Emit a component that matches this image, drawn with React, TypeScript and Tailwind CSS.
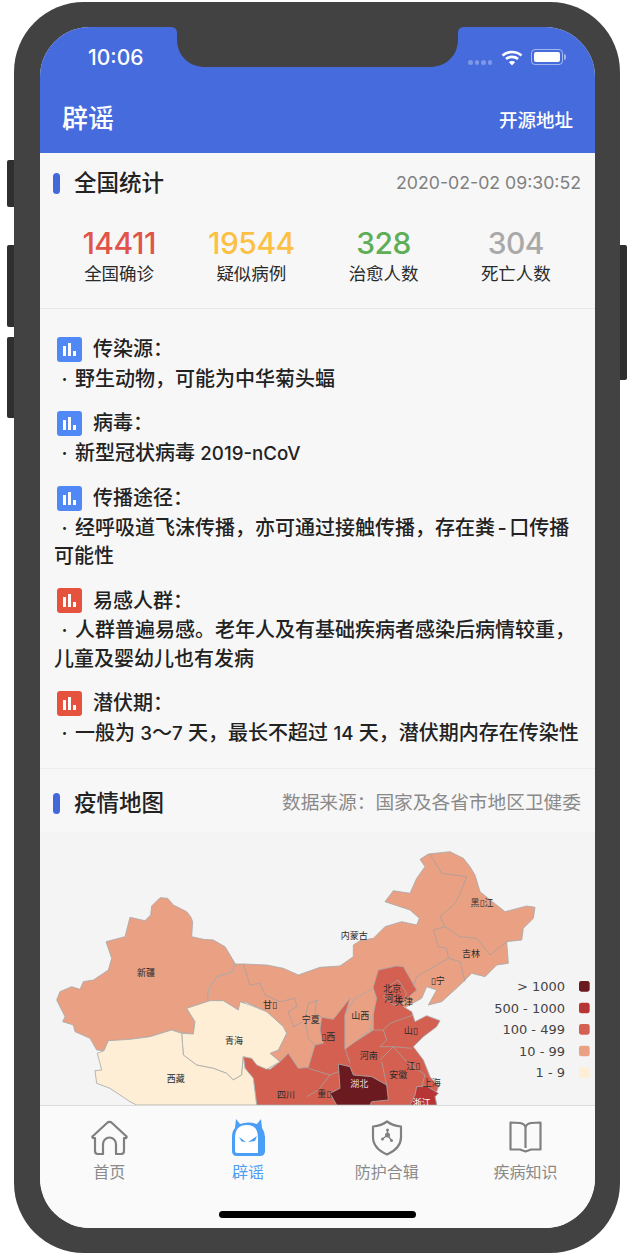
import type { ReactNode } from "react"

const CJK = "font-['Inter','Noto_Sans_CJK_SC',sans-serif]"

function Latin({ children }: { children: ReactNode }) {
  return <span className="text-[18.7px]">{children}</span>
}

// full-width punctuation is written as escapes
const infoList: { title: string; color: string; lines: ReactNode }[] = [
  { title: "传染源\uFF1A", color: "bg-[#5089f6]", lines: "野生动物\uFF0C可能为中华菊头蝠" },
  { title: "病毒\uFF1A", color: "bg-[#5089f6]", lines: <>新型冠状病毒 <Latin>2019-nCoV</Latin></> },
  {
    title: "传播途径\uFF1A",
    color: "bg-[#5089f6]",
    lines: <>经呼吸道飞沫传播{"\uFF0C"}亦可通过接触传播{"\uFF0C"}存在粪<span className="px-[2.5px]">-</span>口传播可能性</>,
  },
  { title: "易感人群\uFF1A", color: "bg-[#e5533f]", lines: "人群普遍易感。老年人及有基础疾病者感染后病情较重\uFF0C儿童及婴幼儿也有发病" },
  {
    title: "潜伏期\uFF1A",
    color: "bg-[#e5533f]",
    lines: <>一般为 <Latin>3</Latin>{"\uFF5E"}<Latin>7</Latin> 天{"\uFF0C"}最长不超过 <Latin>14</Latin> 天{"\uFF0C"}潜伏期内存在传染性</>,
  },
]

const stats = [
  { value: "14411", label: "全国确诊", color: "text-[#e0544a]" },
  { value: "19544", label: "疑似病例", color: "text-[#fcc044]" },
  { value: "328", label: "治愈人数", color: "text-[#5dae56]" },
  { value: "304", label: "死亡人数", color: "text-[#a9a9a9]" },
]

// map coordinates: 3 units per pixel
const regions = [
  { fill: "#e9a083", d: "M360 203L383 205L400 225L420 235L440 245L452 260L458 275L455 320L490 328L520 330L555 350L570 375L585 400L575 428L530 440L505 480L503 515L440 535L465 575L460 612L425 608L395 600L330 620L270 628L240 635L205 632L192 662L170 660L150 625L105 605L100 585L68 575L75 560L50 510L60 485L95 470L120 478L130 455L160 450L205 420L215 385L198 335L255 320L270 262L315 272L332 255L335 228Z" },
  { fill: "#e9a083", d: "M585 402L610 402L680 405L730 415L775 435L840 412L900 408L940 380L940 345L960 332L1000 325L1035 290L1085 275L1130 285L1138 265L1110 240L1035 215L1060 182L1110 190L1130 145L1155 110L1140 88L1165 72L1230 65L1270 85L1290 110L1305 135L1320 185L1370 225L1395 245L1460 228L1485 232L1480 265L1450 295L1445 330L1400 335L1405 400L1370 405L1335 440L1295 430L1260 465L1205 515L1165 525L1190 480L1160 470L1145 505L1100 530L1000 640L850 740L775 715L745 670L720 695L690 670L715 660L740 610L730 590L680 545L615 515L600 540L595 540L550 512L503 515L505 480L530 440L575 428Z" },
  { fill: "#d46051", d: "M610 680L635 685L665 712L690 718L720 695L745 670L775 715L805 712L825 645L850 640L840 600L845 562L880 568L930 505L915 555L915 655L1000 600L1000 470L1015 420L1070 408L1090 410L1130 480L1085 520L1090 530L1115 545L1125 575L1160 557L1200 572L1190 590L1150 620L1120 650L1150 690L1170 740L1195 770L1185 800L1190 825L650 825L640 745L615 715Z" },
  { fill: "#e9a083", d: "M915 555L945 505L1000 475L1010 505L990 600L915 658Z" },
  { fill: "#fdeed5", d: "M440 535L510 512L550 512L595 540L600 515L630 525L680 545L730 590L740 610L715 660L690 670L720 695L680 718L650 705L635 685L610 680L605 735L580 750L560 730L520 715L470 705L430 675L425 610L460 612L465 575Z" },
  { fill: "#fdeed5", d: "M205 632L270 628L330 620L395 600L425 610L430 675L470 705L520 715L560 730L580 750L605 735L610 680L615 715L640 745L650 825L290 825L270 815L210 775L170 760L165 722L185 720L172 670L192 662Z" },
  { fill: "#b83535", d: "M1130 770L1160 768L1195 790L1185 800L1190 825L1110 825L1125 795Z" },
  { fill: "#6b1a1f", d: "M895 702L930 710L940 735L995 740L1040 765L1045 810L995 815L990 825L890 825L870 790L900 775Z" },
]

const borders = [
  "M610 402L630 465L660 460L675 495L720 515L765 505L770 530L745 545L760 590L790 575",
  "M835 510L805 520L795 565L805 625L825 645",
  "M830 510L825 550L845 562",
  "M1170 72L1205 130L1280 140L1260 190L1245 220L1200 260L1215 290L1180 300L1195 350L1220 355L1225 385L1130 440L1120 470",
  "M1215 290L1260 320L1310 325L1350 375L1400 335",
  "M1225 385L1260 395L1275 455",
  "M915 655L930 700",
  "M990 600L1030 600L1050 580L1120 555",
  "M1030 600L1040 630L1020 650L1060 650L1115 655",
  "M1020 690L1060 650L1095 690L1155 735L1145 770",
  "M1025 695L1040 765",
  "M800 800L835 780L870 735",
  "M805 715L870 735L895 725",
  "M1050 465L1075 450L1100 490L1085 520",
  "M1060 470L1030 500L1060 525L1085 520",
]

const labels = [
  { x: 318, y: 430, t: "新疆" }, { x: 690, y: 525, t: "甘▯" }, { x: 812, y: 570, t: "宁夏" },
  { x: 582, y: 632, t: "青海" }, { x: 407, y: 747, t: "西藏" }, { x: 738, y: 795, t: "四川" },
  { x: 943, y: 318, t: "内蒙古" }, { x: 1326, y: 220, t: "黑▯江" }, { x: 1293, y: 373, t: "吉林" },
  { x: 1193, y: 452, t: "▯宁" }, { x: 1057, y: 477, t: "北京" }, { x: 1060, y: 507, t: "河北" },
  { x: 1092, y: 515, t: "天津" }, { x: 961, y: 558, t: "山西" }, { x: 1112, y: 602, t: "山▯" },
  { x: 865, y: 622, t: "▯西" }, { x: 986, y: 678, t: "河南" }, { x: 1120, y: 708, t: "江▯" },
  { x: 1075, y: 736, t: "安徽" }, { x: 1175, y: 758, t: "上海" }, { x: 853, y: 793, t: "重▯" },
]

const legend = [
  { y: 469, t: "> 1000", fill: "#6b1a1f" },
  { y: 534, t: "500 - 1000", fill: "#b83535" },
  { y: 598, t: "100 - 499", fill: "#d46051" },
  { y: 663, t: "10 - 99", fill: "#e9a083" },
  { y: 728, t: "1 - 9", fill: "#fdeed5" },
]

function ChinaMap() {
  return (
    <svg viewBox="0 6 1665 819" className="block h-[273px] w-[555px] bg-[#f4f4f4] font-['DejaVu_Sans','Noto_Sans_CJK_SC',sans-serif]">
      {regions.map((r, i) => (
        <path key={i} d={r.d} fill={r.fill} stroke="#aaaaaa" strokeWidth="2.5" strokeLinejoin="round" />
      ))}
      {borders.map((d, i) => (
        <path key={i} d={d} fill="none" stroke="#aaa09b" strokeWidth="2.5" strokeLinejoin="round" />
      ))}
      {labels.map((l) => (
        <text key={l.t} x={l.x} y={l.y} fontSize="27" fill="#2b2b2b" textAnchor="middle" dominantBaseline="central">{l.t}</text>
      ))}
      <text x="958" y="763" fontSize="27" fill="#e6d4d4" textAnchor="middle" dominantBaseline="central">湖北</text>
      <text x="1145" y="820" fontSize="27" fill="#ffffff" textAnchor="middle" dominantBaseline="central">浙江</text>
      {legend.map((l) => (
        <g key={l.y}>
          <text x="1575" y={l.y} fontSize="39" fill="#444444" textAnchor="end" dominantBaseline="central">{l.t}</text>
          <rect x="1617" y={l.y - 16} width="32" height="32" rx="7" fill={l.fill} />
        </g>
      ))}
    </svg>
  )
}

function ChartIcon({ color }: { color: string }) {
  return (
    <span className={`flex h-[25px] w-[25px] shrink-0 items-end justify-center gap-[2.6px] rounded-[3px] pb-[6px] ${color}`}>
      <span className="h-[10px] w-[3px] bg-white" />
      <span className="h-[13px] w-[2.5px] bg-white" />
      <span className="h-[5px] w-[3px] bg-white" />
    </span>
  )
}

function SectionHead({ title, right, className }: { title: string; right: string; className: string }) {
  return (
    <div className={`flex items-center pl-[13px] pr-[14px] ${className}`}>
      <span className="h-[21px] w-[7px] rounded-full bg-[#4468dc]" />
      <span className="ml-[14px] text-[22.5px] font-medium text-[#222]">{title}</span>
      <span className={right.startsWith("2") ? "ml-auto text-[17.7px] text-[#808080]" : "ml-auto text-[18.7px] text-[#8a8a8a]"}>{right}</span>
    </div>
  )
}

function TabItem({ label, active, children }: { label: string; active?: boolean; children: ReactNode }) {
  return (
    <div className="flex w-[138.75px] flex-col items-center">
      <div className="flex h-[37px] items-center justify-center">{children}</div>
      <span className={`mt-[5px] text-[16px] leading-[22px] ${active ? "text-[#4a9ef5]" : "text-[#8a8a8a]"}`}>{label}</span>
    </div>
  )
}

export default function App() {
  return (
    <div className={`h-[1256px] w-[634px] overflow-hidden bg-white pl-[14px] pt-[2px] ${CJK}`}>
      <div className="relative h-[1251px] w-[606px] rounded-[70px] bg-[#424242] pb-[25px] pl-[26px] pr-[25px] pt-[25px]">
        {/* side buttons */}
        <span className="absolute left-[-7px] top-[158px] h-[47px] w-[7px] rounded-l-[2px] bg-[#2f2f2f]" />
        <span className="absolute left-[-7px] top-[243px] h-[82px] w-[7px] rounded-l-[2px] bg-[#2f2f2f]" />
        <span className="absolute left-[-7px] top-[335px] h-[81px] w-[7px] rounded-l-[2px] bg-[#2f2f2f]" />
        <span className="absolute right-[-7px] top-[243px] h-[135px] w-[7px] rounded-r-[2px] bg-[#2f2f2f]" />

        <div className="flex h-full flex-col overflow-hidden rounded-[50px] bg-[#f7f7f7]">
          {/* header */}
          <div className="relative h-[126px] shrink-0 bg-[#466bdc] text-white">
            <svg className="absolute left-[130px] top-0" width="295" height="40" viewBox="0 0 295 40">
              <path d="M0 0C5 0 7 2 7 6V12C7 30 20 40 36 40H259C275 40 288 30 288 12V6C288 2 290 0 295 0Z" fill="#424242" />
            </svg>
            <span className="absolute left-[48px] top-[16px] font-['Inter',sans-serif] text-[21px] font-medium leading-[30px]">10:06</span>
            <span className="absolute left-[428px] top-[33px] flex gap-[2px] opacity-30">
              <i className="h-[4.5px] w-[4.5px] rounded-full bg-white" />
              <i className="h-[4.5px] w-[4.5px] rounded-full bg-white" />
              <i className="h-[4.5px] w-[4.5px] rounded-full bg-white" />
              <i className="h-[4.5px] w-[4.5px] rounded-full bg-white" />
            </span>
            <svg className="absolute left-[461px] top-[23px]" width="22" height="16" viewBox="0 0 22 16" fill="none" stroke="#fff" strokeWidth="2.6">
              <path d="M1.5 5.5C6.5 .8 15.5 .8 20.5 5.5" />
              <path d="M5 9C8.200 6.200 13.800 6.200 17 9" />
              <path d="M11 15.500L7.800 12C9.600 10.600 12.400 10.600 14.200 12Z" fill="#fff" stroke="none" />
            </svg>
            <span className="absolute left-[491px] top-[22px] flex h-[16px] w-[32px] items-center rounded-[4px] border border-white/50 p-[2px]">
              <i className="h-full w-full rounded-[2px] bg-white" />
            </span>
            <span className="absolute left-[524px] top-[27px] h-[6px] w-[1.5px] rounded-r bg-white/50" />
            <span className="absolute left-[22px] top-[76px] text-[26px] font-medium leading-[32px]">辟谣</span>
            <span className="absolute right-[22px] top-[79px] text-[18.5px] font-medium leading-[28px]">开源地址</span>
          </div>

          {/* content */}
          <div className="min-h-0 flex-1 overflow-hidden">
            <SectionHead title="全国统计" right="2020-02-02 09:30:52" className="h-[60px]" />
            <div className="grid h-[96px] grid-cols-4 border-b border-[#e9e9e9] pl-[13px] pr-[13px]">
              {stats.map((s) => (
                <div key={s.label} className="flex flex-col items-center pt-[13px]">
                  <span className={`text-[30px] font-medium leading-[34px] tracking-[-0.5px] ${s.color}`}>{s.value}</span>
                  <span className="mt-[2px] text-[17.5px] leading-[24px] text-[#2a2a2a]">{s.label}</span>
                </div>
              ))}
            </div>
            <div className="flex h-[460px] flex-col gap-[17px] border-b border-[#ececec] pl-[14px] pr-[13px] pt-[27px]">
              {infoList.map((item) => (
                <div key={item.title}>
                  <div className="flex h-[26px] items-center pl-[3px]">
                    <ChartIcon color={item.color} />
                    <span className="ml-[11px] text-[20px] font-medium leading-[26px] text-[#222]">{item.title}</span>
                  </div>
                  <p className="mt-[2.5px] text-[20px] font-medium leading-[28.5px] text-[#222]">
                    <span className="inline-block w-[21px] text-center">·</span>
                    {item.lines}
                  </p>
                </div>
              ))}
            </div>
            <SectionHead title="疫情地图" right={"数据来源\uFF1A国家及各省市地区卫健委"} className="h-[63px] pt-[5px]" />
            <ChinaMap />
          </div>

          {/* tab bar */}
          <div className="flex h-[123px] shrink-0 items-start border-t border-[#dcdcdc] bg-[#fafafa] pt-[13px]">
            <div className="flex w-full">
              <TabItem label="首页">
                <svg width="37" height="35" viewBox="0 0 37 35" fill="none" stroke="#808080" strokeWidth="2.2" strokeLinejoin="round">
                  <path d="M16 3a3.500 3.500 0 0 1 5 0L35 16a1 1 0 0 1-1 2H33V31a3 3 0 0 1-3 3H25V24a6.500 6.500 0 0 0-13 0V34H7a3 3 0 0 1-3-3V18H3a1 1 0 0 1-1-2Z" />
                </svg>
              </TabItem>
              <TabItem label="辟谣" active>
                <svg width="33" height="37" viewBox="0 0 33 37">
                  <path d="M4 0L8 5Q16 2 25 5L29 0L30 9Q33 13 33 18V32Q33 37 28 37H5Q0 37 0 32V18Q0 12 3 9Z" fill="#4a9ef5" />
                  <path d="M3 19Q3 6 15 6Q26 6 26 19V34H5Q3 34 3 32Z" fill="#fff" />
                  <path d="M7 18L14 23L9.500 22.500ZM16 23L25 17L23 22Z" fill="#4a9ef5" />
                </svg>
              </TabItem>
              <TabItem label="防护合辑">
                <svg width="32" height="36" viewBox="0 0 32 36" fill="none" stroke="#808080" strokeWidth="2.2" strokeLinejoin="round">
                  <path d="M16 1.500C20 4.500 25 6 30 6.500V17C30 25 24 31 16 34.500C8 31 2 25 2 17V6.500C7 6 12 4.500 16 1.500Z" />
                  <path d="M16.500 15L11.500 19M16.500 15V10M16.500 15L20.500 20.500" strokeWidth="1.300" />
                  <circle cx="16.500" cy="15" r="2.500" fill="#808080" stroke="none" />
                  <circle cx="11.500" cy="19" r="1.500" fill="#808080" stroke="none" />
                  <circle cx="16.500" cy="10" r="1.500" fill="#808080" stroke="none" />
                  <circle cx="20.500" cy="20.500" r="1.500" fill="#808080" stroke="none" />
                </svg>
              </TabItem>
              <TabItem label="疾病知识">
                <svg width="33" height="33" viewBox="0 0 33 33" fill="none" stroke="#808080" strokeWidth="2.2" strokeLinejoin="round">
                  <path d="M1.500 1.500L11 2C13.500 2.500 15.500 3.500 16.500 5.500C17.500 3.500 19.500 2.500 22 2L31.500 1.500V28.500H22L16.500 30.500L11 28.500H1.500Z" />
                  <path d="M16.500 5.500V27" />
                </svg>
              </TabItem>
            </div>
          </div>
        </div>

        {/* home indicator */}
        <span className="absolute left-[205px] top-[1209px] h-[7px] w-[197px] rounded-full bg-black" />
      </div>
    </div>
  )
}
